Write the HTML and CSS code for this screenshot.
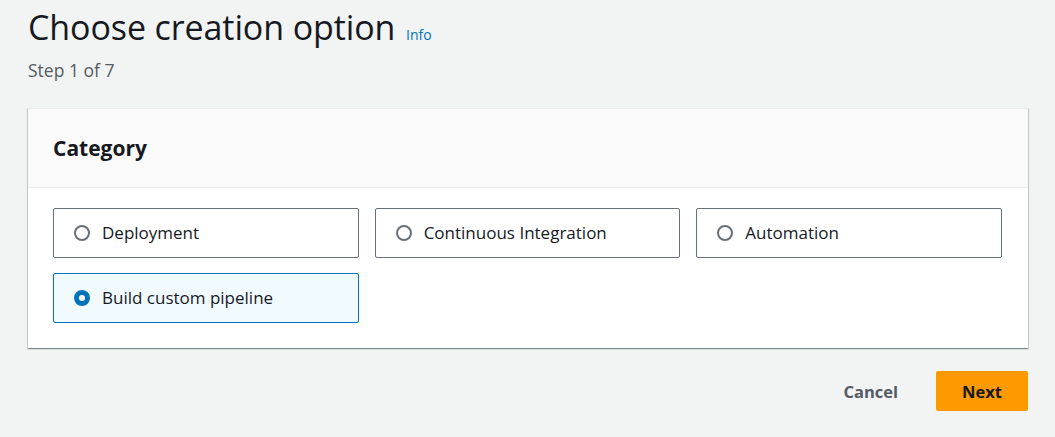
FILE: index.html
```html
<!DOCTYPE html>
<html lang="en">
<head>
<meta charset="utf-8">
<title>Choose creation option</title>
<link rel="stylesheet" href="styles.css">
</head>
<body>
<div class="page">
  <header class="page-header">
    <h1 class="title">Choose creation option <a class="info" href="#">Info</a></h1>
    <div class="step">Step 1 of 7</div>
  </header>
  <section class="card">
    <div class="card-header"><h2>Category</h2></div>
    <div class="card-body">
      <div class="tiles">
        <label class="tile"><span class="radio"></span><span class="tile-label">Deployment</span></label>
        <label class="tile"><span class="radio"></span><span class="tile-label">Continuous Integration</span></label>
        <label class="tile"><span class="radio"></span><span class="tile-label">Automation</span></label>
        <label class="tile selected"><span class="radio checked"></span><span class="tile-label">Build custom pipeline</span></label>
      </div>
    </div>
  </section>
  <div class="actions">
    <button class="btn-link">Cancel</button>
    <button class="btn-primary">Next</button>
  </div>
</div>
</body>
</html>
```
FILE: styles.css
```css
html, body {
  margin: 0;
  padding: 0;
  background: #f2f3f3;
  font-family: "Open Sans", "Noto Sans", sans-serif;
  color: #16191f;
}
.page {
  padding: 5px 27px 0 28px;
}
.page-header {
  margin-bottom: 28px;
}
.title {
  margin: 0;
  font-size: 34px;
  font-weight: 400;
  line-height: 44px;
  letter-spacing: -0.1px;
  color: #16191f;
}
.info {
  font-size: 14px;
  color: #0073bb;
  text-decoration: none;
  margin-left: 2px;
  letter-spacing: 0;
}
.step {
  margin-top: 3px;
  font-size: 17.5px;
  line-height: 20px;
  color: #545b64;
}
.card {
  background: #fff;
  box-shadow: 0 1px 1px 0 rgba(0, 28, 36, 0.3), 1px 1px 1px 0 rgba(0, 28, 36, 0.15), -1px 1px 1px 0 rgba(0, 28, 36, 0.15);
  border-top: 1px solid #eaeded;
}
.card-header {
  background: #fafafa;
  border-bottom: 1px solid #eaeded;
  height: 78px;
  display: flex;
  align-items: center;
  padding: 0 25px;
}
.card-header h2 {
  margin: 0;
  font-size: 21px;
  font-weight: 700;
  line-height: 24px;
}
.card-body {
  padding: 20px 26px 25px 25px;
}
.tiles {
  display: grid;
  grid-template-columns: repeat(3, 1fr);
  gap: 15px 16px;
}
.tile {
  display: flex;
  align-items: center;
  height: 48px;
  border: 1px solid #687078;
  border-radius: 2px;
  padding: 0 20px;
  background: #fff;
  cursor: pointer;
}
.tile.selected {
  background: #f1faff;
  border-color: #0073bb;
}
.radio {
  box-sizing: border-box;
  width: 16px;
  height: 16px;
  border: 2px solid #687078;
  border-radius: 50%;
  margin-right: 12px;
  flex: none;
  background: #fff;
}
.radio.checked {
  border: 5px solid #0073bb;
  background: #fff;
}
.tile-label {
  font-size: 17px;
  line-height: 22px;
}
.actions {
  display: flex;
  justify-content: flex-end;
  align-items: center;
  margin-top: 23px;
  gap: 20px;
}
.btn-link {
  background: none;
  border: none;
  font-family: inherit;
  font-size: 16.5px;
  font-weight: 700;
  color: #545b64;
  padding: 0 18px;
  height: 40px;
}
.btn-primary {
  background: #ff9900;
  border: none;
  border-radius: 2px;
  font-family: inherit;
  font-size: 16.5px;
  font-weight: 700;
  color: #16191f;
  width: 92px;
  height: 40px;
}
```
